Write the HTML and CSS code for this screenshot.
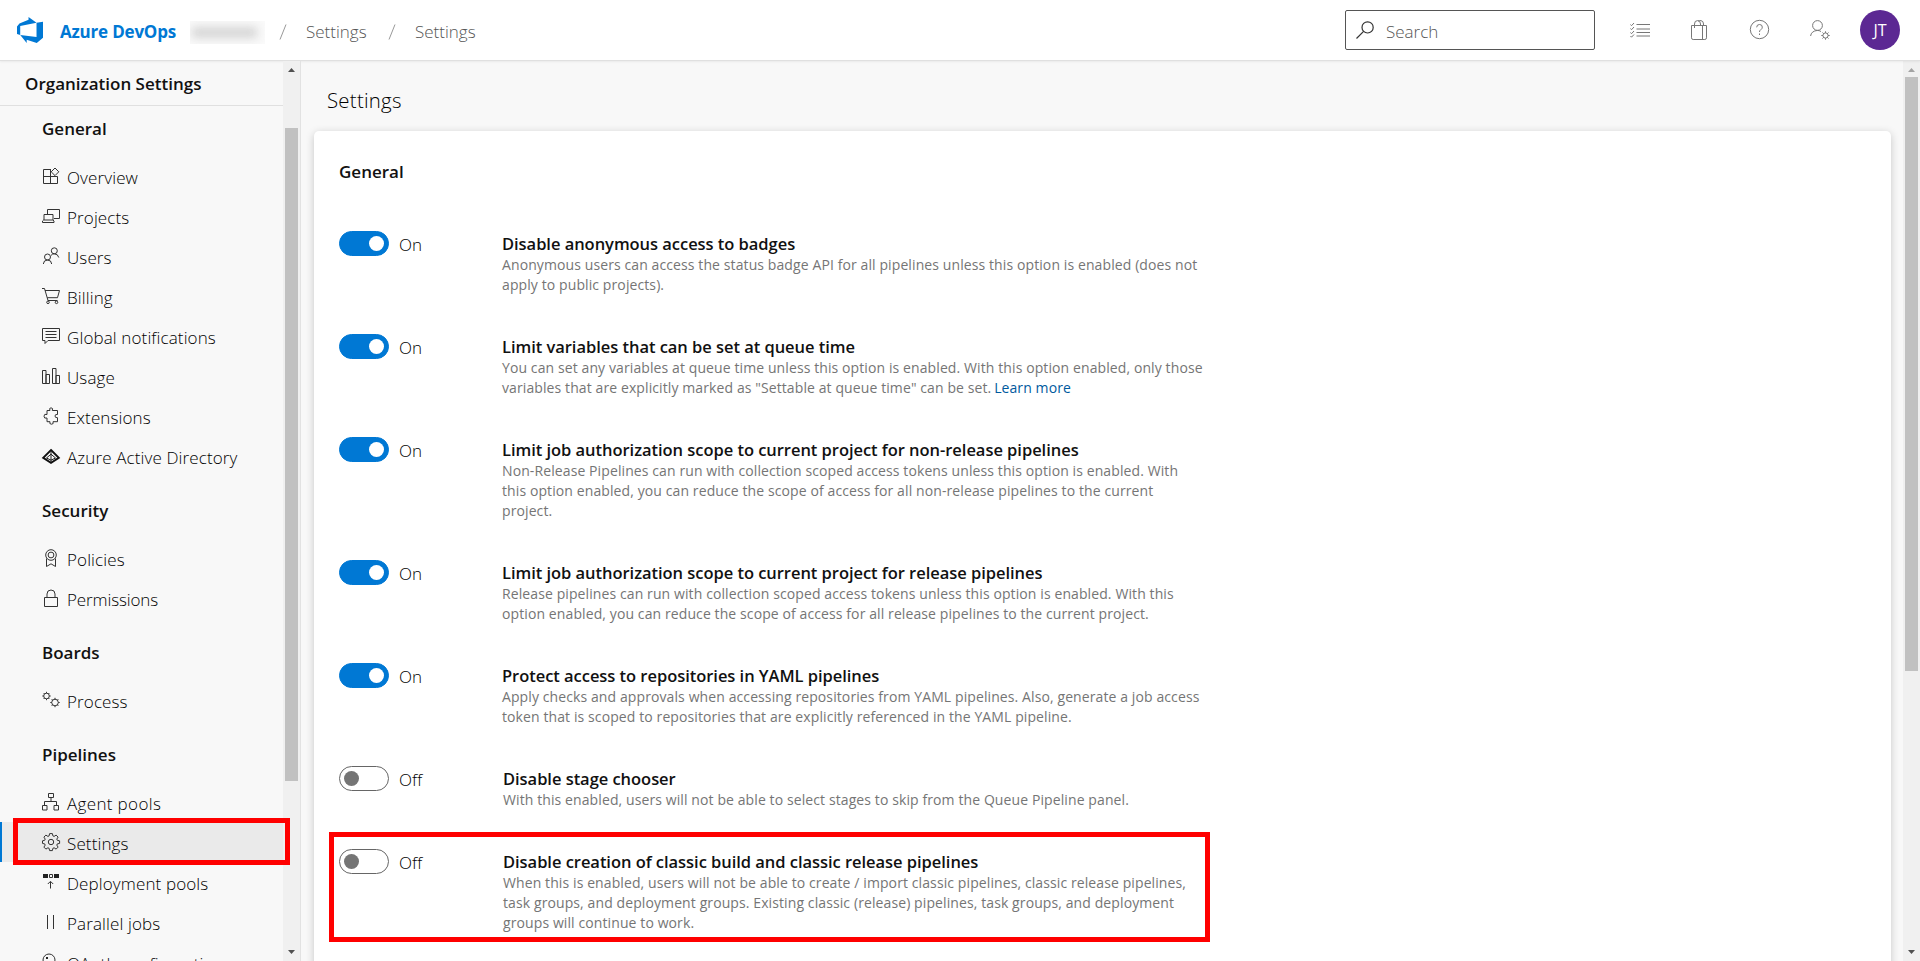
FILE: index.html
```html
<!DOCTYPE html>
<html lang="en">
<head>
<meta charset="utf-8">
<title>Settings - Azure DevOps</title>
<link rel="stylesheet" href="styles.css">
</head>
<body>
<header class="topbar">
  <svg class="logo" viewBox="0 0 24 24"><path d="M0 8.877L2.247 5.91l8.405-3.416V.022l7.37 5.393L2.966 8.338v8.225L0 15.707zm24-4.45v14.651l-5.753 4.9-9.303-3.057v3.056l-5.978-7.416 15.057 1.798V5.415z"/></svg>
  <span class="brand">Azure DevOps</span>
  <span class="org"><i></i></span>
  <svg class="slash" viewBox="0 0 8 16"><path d="M7 0.5L1 15.5"/></svg>
  <span class="crumb">Settings</span>
  <svg class="slash" viewBox="0 0 8 16"><path d="M7 0.5L1 15.5"/></svg>
  <span class="crumb">Settings</span>
  <div class="search">
    <svg viewBox="0 0 18 18"><circle cx="11.6" cy="6.4" r="5.6"/><path d="M7.6 10.4L.5 17.5"/></svg>
    <span>Search</span>
  </div>
  <div class="actions">
    <svg viewBox="0 0 20 20"><path d="M6.5 4.5H20M6.5 9H20M6.5 12.5H20M6.5 16H20"/><path d="M.5 4.5l1 1.2L4 3M.5 8.5l1 1.2L4 7M.5 12.5l1 1.2L4 11M.5 16l1 1.2L4 14.5"/></svg>
    <svg viewBox="0 0 20 20"><path d="M1.500 5.500h15v12.300q0 1.700-1.700 1.700H3.200q-1.700 0-1.700-1.700zM12.500 5.500v14M4.500 8V4Q4.500.600 7.500.600T10.500 4v1.500M8 1Q9.500.500 11 .600 13.500 1 13.500 4v1.500"/></svg>
    <svg viewBox="0 0 20 20"><circle cx="9.500" cy="9.500" r="9.200"/><path d="M6.700 7.300Q6.700 4.500 9.500 4.500t2.800 2.600Q12.300 8.700 10.800 9.700T9.500 12M9.500 13.500v1.500"/></svg>
    <svg viewBox="0 0 20 20"><circle cx="7.500" cy="5.500" r="4.900"/><path d="M.6 16Q1.200 11 7.500 10.400 9.500 10.500 11 11.500"/><circle cx="15.500" cy="15.500" r="2.600"/><path d="M15.500 11.300v1.600M15.500 18.100v1.600M11.300 15.500h1.600M18.100 15.500h1.600M12.500 12.500l1.200 1.200M17.300 17.300l1.200 1.200M18.500 12.500l-1.200 1.200M13.700 17.300l-1.200 1.200"/></svg>
  </div>
  <span class="avatar">JT</span>
</header>

<div class="body">
  <aside class="sidebar">
    <div class="side-main">
      <div class="side-title">Organization Settings</div>
      <nav>
        <h3 class="first">General</h3>
        <a><svg viewBox="0 0 18 18"><path d="M9 2.500H1.500v14h14V9.500H1.500M8.500 2.500v14M13 1l3.800 3.800L13 8.600 9.200 4.800z"/></svg>Overview</a>
        <a><svg viewBox="0 0 18 18"><path d="M5.500 7V2.500h12v9H12M2 13V7.500h9V13M.5 15.500h11.500V14L11 13H1.700L.5 14z"/></svg>Projects</a>
        <a><svg viewBox="0 0 18 18"><circle cx="12.300" cy="3.800" r="3"/><circle cx="5.500" cy="10" r="3"/><path d="M1.300 17q.3-4 4.200-4t4.200 4M9 8.500q1-1.700 3.300-1.700Q16 7 16.800 10.500"/></svg>Users</a>
        <a><svg viewBox="0 0 18 18"><path d="M0 1.500h2.500L6 13.500h9.500M3 3.500h14.500l-2 7.200H5.300"/><circle cx="6" cy="15.300" r="1.300"/><circle cx="14.500" cy="15.300" r="1.300"/></svg>Billing</a>
        <a><svg viewBox="0 0 18 18"><path d="M.5 1.500h17v12H6L3 16.500v-3H.5zM3.500 4.500h11M3.500 7.500h11M3.500 10.500h11"/></svg>Global notifications</a>
        <a><svg viewBox="0 0 18 18"><path d="M.5 3.500h3.500v13H.5zM4 7.500h3.500v9H4zM10.500 1.500H14v15h-3.500zM14 8.500h3.500v8H14z"/></svg>Usage</a>
        <a><svg viewBox="0 0 18 18"><path d="M5 3.500h3Q6.800 1 9 .8 11.500 1 10.300 3.500h5.200v4Q13 7 13 9t2.500 1.700v4h-4.500q1 2.500-1.500 2.500T8 14.700H5V11Q2 12 2 9.200T5 7.500z"/></svg>Extensions</a>
        <a><svg viewBox="0 0 18 18"><path class="bold" d="M9 3L16.800 10.800 9 15.800 1.200 10.800z"/><path class="thin" d="M9 4v11M4.500 11L9 7.200l4.500 3.800L9 13.200z"/></svg>Azure Active Directory</a>
        <h3>Security</h3>
        <a><svg viewBox="0 0 18 18"><circle cx="9" cy="6" r="5.300"/><circle cx="9" cy="6" r="2.900"/><path d="M4.500 9.500v8L9 14.800l4.500 2.700v-8"/></svg>Policies</a>
        <a class="tight"><svg viewBox="0 0 18 18"><path d="M2.500 8.500h13v9h-13zM5 8.500V5q0-4 4-4t4 4v3.500"/></svg>Permissions</a>
        <h3>Boards</h3>
        <a><svg viewBox="0 0 18 18"><circle cx="4.500" cy="5" r="2.800"/><circle cx="13" cy="11.500" r="3.300"/><path d="M4.500.8v1.400M4.500 7.800v1.400M.3 5h1.400M7.300 5h1.400M1.600 2l1 1M7.400 2l-1 1M1.600 8l1-1M7.400 8l-1-1M13 6.800v1.400M13 14.800v1.400M8.300 11.500h1.400M16.300 11.500h1.400M9.700 8.200l1 1M16.300 8.200l-1 1M9.700 14.800l1-1M16.300 14.800l-1-1"/></svg>Process</a>
        <h3>Pipelines</h3>
        <a class="loose"><svg viewBox="0 0 18 18"><path d="M6.500.5h5v4h-5zM.5 12.500h4.500v4.500H.5zM12 12.500h4.500v4.500H12zM9 4.500v4M2.500 12.500v-4h12v4"/></svg>Agent pools</a>
        <a class="selected"><svg viewBox="0 0 18 18"><circle cx="9" cy="9" r="2.700"/><path d="M7.600.6h2.800l.5 2.300 1.200.5 2-1.300 2 2-1.300 2 .5 1.200 2.300.5v2.600l-2.300.5-.5 1.200 1.300 2-2 2-2-1.300-1.200.5-.5 2.300H7.600l-.5-2.300-1.200-.5-2 1.300-2-2 1.300-2-.5-1.200L.5 10.400V7.800l2.200-.5.5-1.200-1.300-2 2-2 2 1.300 1.200-.5z"/></svg>Settings</a>
        <a><svg viewBox="0 0 18 18"><path class="solid" d="M1 1h5v4H1zM12 1h5v4h-5z"/><path d="M7.500 1.500h3v3h-3zM8.500 15.500V9M5.800 11l2.700-2.700L11.200 11"/></svg>Deployment pools</a>
        <a><svg viewBox="0 0 18 18"><path d="M5.500 2v14M11.500 2v14"/></svg>Parallel jobs</a>
        <a><svg viewBox="0 0 18 18"><circle cx="7" cy="7" r="6"/><path class="solid" d="M4 4h2v2H4z"/></svg>OAuth configuration</a>
      </nav>
    </div>
    <div class="scroll side-scroll">
      <b class="arrow up"></b><div class="thumb"></div><b class="arrow down"></b>
    </div>
  </aside>

  <main>
    <h1>Settings</h1>
    <section class="card">
      <h2>General</h2>
      <div class="row"><span class="toggle on"></span><span class="state">On</span><div class="text"><h4>Disable anonymous access to badges</h4><p>Anonymous users can access the status badge API for all pipelines unless this option is enabled (does not<br>apply to public projects).</p></div></div>
      <div class="row"><span class="toggle on"></span><span class="state">On</span><div class="text"><h4>Limit variables that can be set at queue time</h4><p>You can set any variables at queue time unless this option is enabled. With this option enabled, only those<br>variables that are explicitly marked as "Settable at queue time" can be set. <a>Learn more</a></p></div></div>
      <div class="row"><span class="toggle on"></span><span class="state">On</span><div class="text"><h4>Limit job authorization scope to current project for non-release pipelines</h4><p>Non-Release Pipelines can run with collection scoped access tokens unless this option is enabled. With<br>this option enabled, you can reduce the scope of access for all non-release pipelines to the current<br>project.</p></div></div>
      <div class="row"><span class="toggle on"></span><span class="state">On</span><div class="text"><h4>Limit job authorization scope to current project for release pipelines</h4><p>Release pipelines can run with collection scoped access tokens unless this option is enabled. With this<br>option enabled, you can reduce the scope of access for all release pipelines to the current project.</p></div></div>
      <div class="row"><span class="toggle on"></span><span class="state">On</span><div class="text"><h4>Protect access to repositories in YAML pipelines</h4><p>Apply checks and approvals when accessing repositories from YAML pipelines. Also, generate a job access<br>token that is scoped to repositories that are explicitly referenced in the YAML pipeline.</p></div></div>
      <div class="row"><span class="toggle"></span><span class="state">Off</span><div class="text off"><h4>Disable stage chooser</h4><p>With this enabled, users will not be able to select stages to skip from the Queue Pipeline panel.</p></div></div>
      <div class="row marked"><span class="toggle"></span><span class="state">Off</span><div class="text off"><h4>Disable creation of classic build and classic release pipelines</h4><p>When this is enabled, users will not be able to create / import classic pipelines, classic release pipelines,<br>task groups, and deployment groups. Existing classic (release) pipelines, task groups, and deployment<br>groups will continue to work.</p></div></div>
    </section>
  </main>
  <div class="scroll main-scroll">
    <b class="arrow up"></b><div class="thumb"></div><b class="arrow down"></b>
  </div>
</div>
</body>
</html>
```
FILE: styles.css
```css
*, *::before, *::after { box-sizing: border-box; margin: 0; padding: 0; }
body {
  height: 961px;
  overflow: hidden;
  display: flex;
  flex-direction: column;
  background: #f8f8f8;
  color: #111;
  font-family: "Open Sans", "Noto Sans", sans-serif;
  font-size: 17px;
  white-space: nowrap;
}
svg { display: block; fill: none; stroke: #333; stroke-width: 1; flex: none; overflow: visible; }

.topbar {
  height: 61px;
  flex: none;
  display: flex;
  align-items: center;
  padding: 0 20px 1px 17px;
  background: #fff;
  border-bottom: 1px solid #e0e0e0;
  box-shadow: 0 1px 2px rgba(0, 0, 0, .06);
  position: relative;
}
.logo { width: 26px; height: 26px; fill: #0078d4; stroke: none; }
.brand { width: 130px; margin-left: 17px; padding-top: 4px; font-weight: 700; color: #0078d4; letter-spacing: -.2px; }
.org { width: 75px; height: 23px; margin-top: 5px; background: #fafafa; overflow: hidden; }
.org i { display: block; width: 65px; height: 11px; margin: 6px 0 0 2px; background: #d4d4d4; filter: blur(5px); }
.slash { width: 8px; height: 16px; margin: 5px 19px 0 14px; stroke: #999; }
.crumb { width: 62px; padding-top: 4px; color: #555; font-weight: 300; }
.crumb + .slash { margin-left: 20px; margin-right: 19px; }
.search {
  width: 250px;
  height: 40px;
  margin-left: auto;
  display: flex;
  align-items: center;
  border: 1px solid #555;
  border-radius: 2px;
  padding-left: 10px;
  color: #555;
}
.search svg { width: 18px; height: 18px; margin-right: 12px; stroke-width: 1.2; }
.search span { padding-top: 4px; font-weight: 300; }
.actions { display: flex; gap: 40px; margin: 0 30px 0 35px; }
.actions svg { width: 20px; height: 20px; stroke: #777; }
.avatar { width: 40px; height: 40px; border-radius: 50%; background: #5c2893; color: #fff; font-size: 16px; line-height: 40px; text-align: center; }

.body { flex: 1; min-height: 0; display: flex; }
.sidebar { width: 301px; flex: none; display: flex; border-right: 1px solid #e2e2e2; position: relative; }
.side-main { width: 283px; overflow: hidden; }
.side-title { height: 45px; padding-left: 25px; line-height: 45px; font-weight: 600; border-bottom: 1px solid #e0e0e0; }
nav h3 { height: 62px; padding-left: 42px; line-height: 70px; font-size: 17px; font-weight: 600; }
nav h3.first { height: 50px; line-height: 46px; }
nav a { height: 40px; display: flex; align-items: center; padding: 2px 0 0 68px; font-weight: 300; color: #000; letter-spacing: .12px; }
nav .tight { letter-spacing: -.12px; }
nav .loose { letter-spacing: .35px; }
nav a svg { width: 18px; height: 18px; margin: -2px 7px 0 -26px; }
nav .bold { stroke: #111; stroke-width: 1.9; }
nav .thin { stroke: #222; }
nav .solid { fill: #222; stroke: none; }
nav .selected { background: #eaeaea; box-shadow: inset 2px 0 #0078d4; }
.sidebar::after { content: ""; position: absolute; left: 13px; top: 757px; width: 277px; height: 47px; border: 5px solid #f00; }

.scroll { width: 17px; flex: none; display: flex; flex-direction: column; align-items: center; background: #f0f0f0; padding: 7px 0; }
.arrow { width: 7px; height: 4px; background: #505050; flex: none; }
.up { clip-path: polygon(50% 0, 100% 100%, 0 100%); }
.down { clip-path: polygon(0 0, 100% 0, 50% 100%); margin-top: auto; }
.thumb { width: 13px; background: #c1c1c1; }
.side-scroll .thumb { height: 653px; margin-top: 56px; }
.main-scroll .thumb { height: 594px; margin-top: 5px; }
.main-scroll .up { background: #a3a3a3; }

main { flex: 1; padding: 0 12px 0 13px; overflow: hidden; }
h1 { height: 70px; padding: 3px 0 0 13px; line-height: 72px; font-size: 20.4px; font-weight: 300; letter-spacing: .25px; color: #000; }
.card { height: 900px; background: #fff; border-radius: 5px; padding: 0 25px; box-shadow: 0 2px 8px rgba(0, 0, 0, .2); }
h2 { height: 97px; line-height: 81px; font-size: 17px; font-weight: 600; }
.row { display: flex; align-items: flex-start; padding-bottom: 40px; position: relative; }
.toggle { width: 50px; height: 25px; margin-top: 3px; border: 1px solid #666; border-radius: 13px; padding: 4px; }
.toggle::before { content: ""; display: block; width: 15px; height: 15px; border-radius: 50%; background: #757575; }
.toggle.on { background: #0078d4; border-color: #0078d4; }
.toggle.on::before { background: #fff; margin-left: 25px; }
.state { width: 103px; padding-left: 10px; line-height: 33px; height: 23px; font-weight: 300; color: #000; }
.text { padding-left: 10px; }
.text.off { padding-left: 11px; }
h4 { height: 23px; line-height: 31px; font-size: 16.5px; font-weight: 600; letter-spacing: -.04px; }
p { padding-top: 4px; margin-bottom: -4px; font-size: 14px; line-height: 20px; letter-spacing: .1px; color: #757575; }
p a { color: #005a9e; margin-left: -1px; }
.marked::after { content: ""; position: absolute; left: -10px; top: -14px; width: 881px; height: 110px; border: 5px solid #f00; }
```
